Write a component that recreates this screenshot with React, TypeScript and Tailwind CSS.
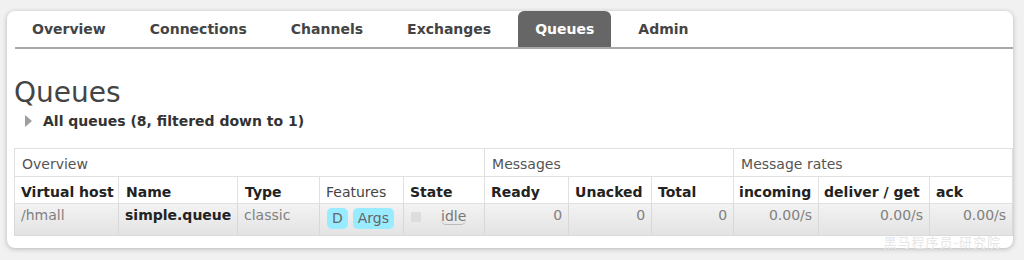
import React from 'react';

const tabs = ['Overview', 'Connections', 'Channels', 'Exchanges', 'Queues', 'Admin'];

const cols = [104, 119, 82, 84, 81, 84, 83, 82, 85, 111, 83];

const App: React.FC = () => {
  return (
    <div className="w-[1024px] h-[260px] bg-[#f1f1f1] pt-[11px] pl-[7px] overflow-hidden font-['DejaVu_Sans',Verdana,sans-serif]">
      <div className="relative w-[1006px] h-[237px] bg-white rounded-[8px] shadow-[0_1px_5px_rgba(0,0,0,0.25)] pl-[7px]">
        {/* Tabs */}
        <div className="flex h-[38px] border-b-2 border-[#a9a9a9] ml-[1px]">
          {tabs.map((t) => (
            <div
              key={t}
              className={
                t === 'Queues'
                  ? 'h-[36px] px-[17px] mr-[10px] flex items-center rounded-t-[6px] bg-[#666666] text-white text-[14px] font-bold'
                  : 'h-[36px] px-[17px] mr-[10px] flex items-center text-[#444444] text-[14px] font-bold'
              }
            >
              {t}
            </div>
          ))}
        </div>

        {/* Heading */}
        <h1 className="mt-[28px] text-[28px] leading-[32px] text-[#444444] font-normal">Queues</h1>
        <div className="flex items-center h-[20px] mt-[2px]">
          <span className="ml-[11px] w-0 h-0 border-y-[6px] border-y-transparent border-l-[7px] border-l-[#9e9e9e]" />
          <span className="ml-[11px] text-[14px] font-bold text-[#333333]">All queues (8, filtered down to 1)</span>
        </div>

        {/* Table */}
        <table className="mt-[17px] table-fixed border-collapse text-[14px] w-[998px] border border-[#d6d6d6]">
          <colgroup>
            {cols.map((w, i) => (
              <col key={i} style={{ width: w }} />
            ))}
          </colgroup>
          <thead>
            <tr className="h-[28px]">
              <th colSpan={5} className="text-left font-normal text-[#555555] px-[7px] pt-[4px] border border-[#e0e0e0]">Overview</th>
              <th colSpan={3} className="text-left font-normal text-[#555555] px-[7px] pt-[4px] border border-[#e0e0e0]">Messages</th>
              <th colSpan={3} className="text-left font-normal text-[#555555] px-[7px] pt-[4px] border border-[#e0e0e0]">Message rates</th>
            </tr>
            <tr className="h-[27px] text-[#222222]">
              <th className="text-left font-bold px-[6px] pt-[4px] border border-[#e0e0e0] whitespace-nowrap">Virtual host</th>
              <th className="text-left font-bold px-[7px] pt-[4px] border border-[#e0e0e0]">Name</th>
              <th className="text-left font-bold px-[7px] pt-[4px] border border-[#e0e0e0]">Type</th>
              <th className="text-left font-normal text-[#444444] px-[6px] pt-[4px] border border-[#e0e0e0]">Features</th>
              <th className="text-left font-bold px-[6px] pt-[4px] border border-[#e0e0e0]">State</th>
              <th className="text-left font-bold px-[6px] pt-[4px] border border-[#e0e0e0]">Ready</th>
              <th className="text-left font-bold px-[6px] pt-[4px] border border-[#e0e0e0]">Unacked</th>
              <th className="text-left font-bold px-[6px] pt-[4px] border border-[#e0e0e0]">Total</th>
              <th className="text-left font-bold px-[5px] pt-[4px] border border-[#e0e0e0]">incoming</th>
              <th className="text-left font-bold px-[5px] pt-[4px] border border-[#e0e0e0] whitespace-nowrap">deliver / get</th>
              <th className="text-left font-bold px-[6px] pt-[4px] border border-[#e0e0e0]">ack</th>
            </tr>
          </thead>
          <tbody>
            <tr className="h-[32px] bg-gradient-to-b from-[#f3f3f3] to-[#e3e3e3] text-[#808080] leading-[15px]">
              <td className="px-[6px] pt-[4px] align-top border border-[#d9d9d9]">/hmall</td>
              <td className="px-[6px] pt-[4px] align-top border border-[#d9d9d9] font-bold text-[#222222] whitespace-nowrap">simple.queue</td>
              <td className="px-[6px] pt-[4px] align-top border border-[#d9d9d9]">classic</td>
              <td className="px-[7px] pt-[4px] align-top border border-[#d9d9d9]">
                <div className="flex items-center gap-[5px]">
                  <span className="h-[21px] px-[5px] flex items-center rounded-[5px] bg-[#99ebff] text-[#666666]">D</span>
                  <span className="h-[21px] px-[5px] flex items-center rounded-[5px] bg-[#99ebff] text-[#666666]">Args</span>
                </div>
              </td>
              <td className="px-[6px] pt-[4px] align-top border border-[#d9d9d9]">
                <div className="flex items-center">
                  <span className="w-[10px] h-[10px] bg-[#dddddd] ml-px" />
                  <span className="ml-[20px] border-b border-[#bbbbbb] rounded-b-[5px] leading-[16px] text-[#777777]">idle</span>
                </div>
              </td>
              <td className="px-[6px] pt-[4px] align-top border border-[#d9d9d9] text-right">0</td>
              <td className="px-[6px] pt-[4px] align-top border border-[#d9d9d9] text-right">0</td>
              <td className="px-[6px] pt-[4px] align-top border border-[#d9d9d9] text-right">0</td>
              <td className="px-[6px] pt-[4px] align-top border border-[#d9d9d9] text-right">0.00/s</td>
              <td className="px-[6px] pt-[4px] align-top border border-[#d9d9d9] text-right">0.00/s</td>
              <td className="px-[6px] pt-[4px] align-top border border-[#d9d9d9] text-right">0.00/s</td>
            </tr>
          </tbody>
        </table>

        {/* Watermark */}
        <div className="absolute right-[12px] bottom-[-3px] text-[13px] tracking-[1px] text-[#e6e6e6] font-['Noto_Sans_CJK_SC',sans-serif]">
          黑马程序员-研究院
        </div>
      </div>
    </div>
  );
};

export default App;
